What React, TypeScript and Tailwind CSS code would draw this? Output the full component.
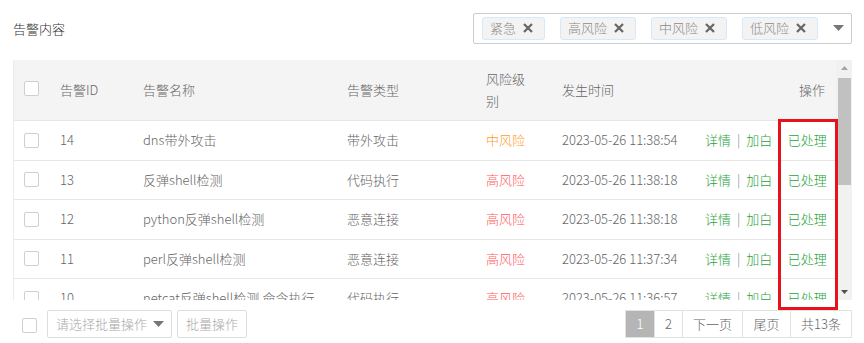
import React from 'react';

type Row = {
  id: number;
  name: string;
  type: string;
  risk: string;
  time: string;
};

const rows: Row[] = [
  { id: 14, name: 'dns带外攻击', type: '带外攻击', risk: '中风险', time: '2023-05-26 11:38:54' },
  { id: 13, name: '反弹shell检测', type: '代码执行', risk: '高风险', time: '2023-05-26 11:38:18' },
  { id: 12, name: 'python反弹shell检测', type: '恶意连接', risk: '高风险', time: '2023-05-26 11:38:18' },
  { id: 11, name: 'perl反弹shell检测', type: '恶意连接', risk: '高风险', time: '2023-05-26 11:37:34' },
  { id: 10, name: 'netcat反弹shell检测,命令执行', type: '代码执行', risk: '高风险', time: '2023-05-26 11:36:57' },
];

const tags = ['紧急', '高风险', '中风险', '低风险'];

function Checkbox() {
  return <span className="block w-[15px] h-[15px] border border-[#cfcfcf] rounded-[2px] bg-white" />;
}

function Caret({ className = '' }: { className?: string }) {
  return (
    <svg className={className} width="11" height="6" viewBox="0 0 11 6">
      <path d="M0 0h11L5.5 6z" fill="#777" />
    </svg>
  );
}

export default function App() {
  return (
    <div
      className="relative w-[864px] h-[343px] bg-white overflow-hidden text-[13px] text-[#666] font-light"
      style={{ fontFamily: '"Noto Sans CJK SC", "Noto Sans", sans-serif' }}
    >
      {/* Top bar */}
      <div className="flex items-center h-[60px] pl-[13px] pr-[12px] pb-[4px]">
        <div className="text-[#333] leading-[20px] pt-[1px]">告警内容</div>
        <div className="ml-auto flex items-center w-[379px] h-[31px] border border-[#cccccc] rounded-[2px] pl-[8px] pr-[7px]">
          <div className="flex items-center gap-[15px]">
            {tags.map(t => (
              <span
                key={t}
                className="flex items-center h-[23px] pl-[7px] pr-[11px] bg-[#f3f3f3] border border-[#d6e8fb] rounded-[3px] text-[#8a8a8a] leading-[20px]"
              >
                {t}
                <svg className="ml-[7px]" width="10" height="10" viewBox="0 0 10 10">
                  <path d="M1 1l8 8M9 1L1 9" stroke="#666" strokeWidth="2.2" />
                </svg>
              </span>
            ))}
          </div>
          <Caret className="ml-auto" />
        </div>
      </div>

      {/* Table */}
      <div className="flex ml-[13px] mr-[12px] h-[240px]">
        <div className="flex-1 overflow-hidden border-l border-[#ececec]">
          <div className="flex items-center h-[61px] bg-[#f4f4f4] border-b border-[#e6e6e6] leading-[22px]">
            <div className="w-[46px] pl-[10px] pb-[4px]"><Checkbox /></div>
            <div className="w-[83px]">告警ID</div>
            <div className="w-[204px]">告警名称</div>
            <div className="w-[139px]">告警类型</div>
            <div className="w-[76px]"><div className="max-w-[44px]">风险级别</div></div>
            <div className="w-[143px]">发生时间</div>
            <div className="flex-1 text-right pr-[11px]">操作</div>
          </div>
          {rows.map(r => (
            <div key={r.id} className="flex items-center h-[39.5px] border-b border-[#e6e6e6] leading-[20px] shrink-0">
              <div className="w-[46px] pl-[10px]"><Checkbox /></div>
              <div className="w-[83px]">{r.id}</div>
              <div className="w-[204px]">{r.name}</div>
              <div className="w-[139px]">{r.type}</div>
              <div className={`w-[76px] ${r.risk === '中风险' ? 'text-[#ff9a1f]' : 'text-[#ff5b5b]'}`}>{r.risk}</div>
              <div className="w-[143px]">{r.time}</div>
              <div className="flex-1 flex items-center text-[#2aa33b]">
                <span>详情</span>
                <span className="mx-[6px] text-[#888]">|</span>
                <span>加白</span>
                <span className="mx-[6px] text-[#888]">|</span>
                <span>已处理</span>
              </div>
            </div>
          ))}
        </div>
        {/* scrollbar */}
        <div className="w-[16px] bg-[#f1f1f1] flex flex-col items-center">
          <svg className="mt-[6px]" width="7" height="4" viewBox="0 0 7 4"><path d="M0 4h7L3.5 0z" fill="#a3a3a3" /></svg>
          <div className="mt-[8px] w-[13px] h-[107px] bg-[#c1c1c1]" />
          <svg className="mt-auto mb-[6px]" width="7" height="4" viewBox="0 0 7 4"><path d="M0 0h7L3.5 4z" fill="#505050" /></svg>
        </div>
      </div>

      {/* Bottom bar */}
      <div className="flex items-center mt-[10px] pl-[22px] pr-[12px] h-[28px]">
        <div className="mt-[2px]"><Checkbox /></div>
        <div className="ml-[10px] flex items-center w-[125px] h-[28px] border border-[#dddddd] rounded-[2px] pl-[8px] pr-[7px] text-[#aaaaaa]">
          <span>请选择批量操作</span>
          <Caret className="ml-auto" />
        </div>
        <div className="ml-[5px] flex items-center h-[28px] px-[8px] border border-[#dddddd] rounded-[2px] text-[#aaaaaa]">批量操作</div>
        <div className="ml-auto flex h-[28px] border border-[#e2e2e2] text-[#666]">
          <span className="w-[28px] flex items-center justify-center bg-[#b5b5b5] text-white">1</span>
          <span className="w-[28px] flex items-center justify-center border-l border-[#e2e2e2]">2</span>
          <span className="w-[60px] flex items-center justify-center border-l border-[#e2e2e2]">下一页</span>
          <span className="w-[48px] flex items-center justify-center border-l border-[#e2e2e2]">尾页</span>
          <span className="w-[61px] flex items-center justify-center border-l border-[#e2e2e2]">共13条</span>
        </div>
      </div>

      {/* Annotation box */}
      <div className="absolute left-[778px] top-[119px] w-[60px] h-[191px] border-[3px] border-[#e5141c]" />
    </div>
  );
}
